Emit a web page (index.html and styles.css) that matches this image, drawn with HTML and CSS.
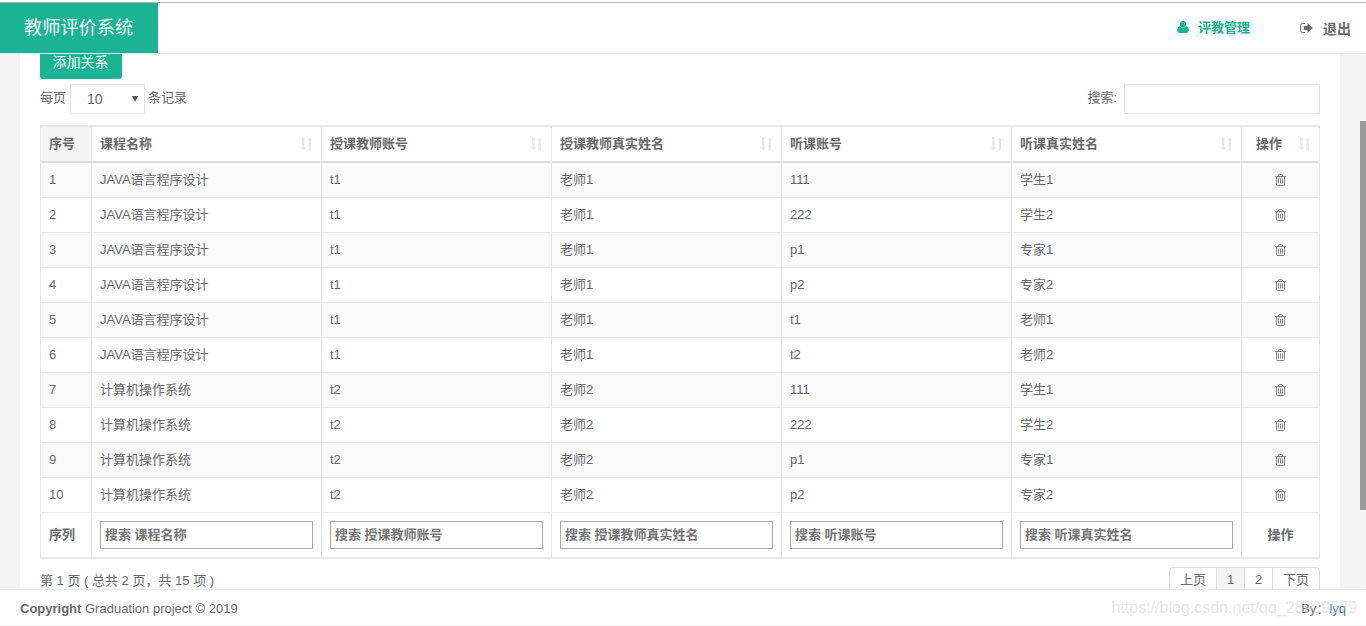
FILE: index.html
```
<!DOCTYPE html>
<html lang="zh-CN">
<head>
<meta charset="utf-8">
<title>教师评价系统</title>
<link rel="stylesheet" href="styles.css">
</head>
<body>
<svg class="defs" aria-hidden="true">
  <symbol id="sort" viewBox="0 0 13 14"><path d="M2 0h2.500v10H6.300L3.250 13.500.2 10H2zM8.500 13.500H11V3.500h1.800L9.750 0 6.700 3.500h1.800z"/></symbol>
  <symbol id="trash" viewBox="0 0 11 12"><path fill="none" stroke="currentColor" d="M.2 2.500h10.600M3.500 2.300V1.500Q3.500.5 4.500.5h2q1 0 1 1v.8M1.500 2.500v8q0 1 1 1h6q1 0 1-1v-8M3.500 4.500v5M5.500 4.500v5M7.500 4.500v5"/></symbol>
</svg>
<div class="page">
  <header class="header">
    <a class="brand">教师评价系统</a>
    <nav class="nav">
      <a class="nav-link active"><svg class="user" viewBox="0 0 12 12"><circle cx="6" cy="3.300" r="3.200"/><path d="M2.900 5.300Q.2 6 .2 9.500.2 11.900 2.500 11.900h7q2.300 0 2.300-2.400Q11.800 6 9.100 5.300 6 8 2.900 5.300z"/></svg><span>评教管理</span></a>
      <a class="nav-link exit"><svg class="signout" viewBox="0 0 13 12"><path fill="none" stroke="currentColor" d="M5 1.500H2.500q-2 0-2 2v5q0 2 2 2H5"/><path d="M3.800 4h3.700V1L12.800 6 7.500 11V8H3.800z"/></svg><span>退出</span></a>
    </nav>
  </header>
  <main class="main">
    <section class="content">
      <button class="add">添加关系</button>
      <div class="tools">
        <div class="length"><span>每页</span><div class="select"><span>10</span><i class="caret"></i></div><span>条记录</span></div>
        <label class="search"><span>搜索:</span><input type="text"></label>
      </div>
      <table class="table">
        <colgroup><col class="c-no"><col><col><col><col><col><col class="c-op"></colgroup>
        <thead><tr>
          <th class="sorted">序号</th>
          <th><div class="head">课程名称<svg><use href="#sort"/></svg></div></th>
          <th><div class="head">授课教师账号<svg><use href="#sort"/></svg></div></th>
          <th><div class="head">授课教师真实姓名<svg><use href="#sort"/></svg></div></th>
          <th><div class="head">听课账号<svg><use href="#sort"/></svg></div></th>
          <th><div class="head">听课真实姓名<svg><use href="#sort"/></svg></div></th>
          <th><div class="head op-head">操作<svg><use href="#sort"/></svg></div></th>
        </tr></thead>
        <tbody>
          <tr><td>1</td><td>JAVA语言程序设计</td><td>t1</td><td>老师1</td><td>111</td><td>学生1</td><td class="op"><svg><use href="#trash"/></svg></td></tr>
          <tr><td>2</td><td>JAVA语言程序设计</td><td>t1</td><td>老师1</td><td>222</td><td>学生2</td><td class="op"><svg><use href="#trash"/></svg></td></tr>
          <tr><td>3</td><td>JAVA语言程序设计</td><td>t1</td><td>老师1</td><td>p1</td><td>专家1</td><td class="op"><svg><use href="#trash"/></svg></td></tr>
          <tr><td>4</td><td>JAVA语言程序设计</td><td>t1</td><td>老师1</td><td>p2</td><td>专家2</td><td class="op"><svg><use href="#trash"/></svg></td></tr>
          <tr><td>5</td><td>JAVA语言程序设计</td><td>t1</td><td>老师1</td><td>t1</td><td>老师1</td><td class="op"><svg><use href="#trash"/></svg></td></tr>
          <tr><td>6</td><td>JAVA语言程序设计</td><td>t1</td><td>老师1</td><td>t2</td><td>老师2</td><td class="op"><svg><use href="#trash"/></svg></td></tr>
          <tr><td>7</td><td>计算机操作系统</td><td>t2</td><td>老师2</td><td>111</td><td>学生1</td><td class="op"><svg><use href="#trash"/></svg></td></tr>
          <tr><td>8</td><td>计算机操作系统</td><td>t2</td><td>老师2</td><td>222</td><td>学生2</td><td class="op"><svg><use href="#trash"/></svg></td></tr>
          <tr><td>9</td><td>计算机操作系统</td><td>t2</td><td>老师2</td><td>p1</td><td>专家1</td><td class="op"><svg><use href="#trash"/></svg></td></tr>
          <tr><td>10</td><td>计算机操作系统</td><td>t2</td><td>老师2</td><td>p2</td><td>专家2</td><td class="op"><svg><use href="#trash"/></svg></td></tr>
        </tbody>
        <tfoot><tr>
          <th>序列</th>
          <th><input placeholder="搜索 课程名称"></th>
          <th><input placeholder="搜索 授课教师账号"></th>
          <th><input placeholder="搜索 授课教师真实姓名"></th>
          <th><input placeholder="搜索 听课账号"></th>
          <th><input placeholder="搜索 听课真实姓名"></th>
          <th class="op">操作</th>
        </tr></tfoot>
      </table>
      <div class="bottom">
        <div class="info">第 1 页 ( 总共 2 页，共 15 项 )</div>
        <div class="pager"><a class="wide">上页</a><a class="current">1</a><a>2</a><a class="wide">下页</a></div>
      </div>
    </section>
    <div class="scroll"><div class="thumb"></div></div>
  </main>
  <footer class="footer">
    <div><b>Copyright</b> Graduation project © 2019</div>
    <div class="by">By：<a>lyq</a></div>
    <div class="watermark">https://blog.csdn.net/qq_28929579</div>
  </footer>
</div>
</body>
</html>
```
FILE: styles.css
```
* { box-sizing: border-box; }
body { margin: 0; overflow: hidden; font: 13px/18px "Liberation Sans", "Noto Sans CJK SC", sans-serif; color: #676a6c; background: #fff; }
input, button { font: inherit; color: inherit; }
.defs { display: none; }
.page { display: flex; flex-direction: column; height: 626px; padding-top: 2px; }
.header { display: flex; justify-content: space-between; height: 52px; flex: none; border-top: 1px solid #b4b4b4; border-bottom: 1px solid #e7eaec; }
.brand { width: 158px; height: 50px; padding-left: 24px; background: #1ab394; color: #fff; font-size: 18.2px; line-height: 50px; }
.nav { display: flex; align-items: center; gap: 50px; padding-right: 15px; font-weight: bold; }
.nav-link { display: flex; align-items: center; height: 49px; }
.nav-link svg { fill: currentColor; }
.active { color: #1ab394; }
.user { width: 12px; height: 12px; margin: 0 9px 2px -1px; }
.exit { font-size: 14px; }
.signout { width: 13px; height: 12px; margin: 0 10px 0 0; }
.exit span { padding-top: 1px; }
.main { display: flex; justify-content: space-between; flex: 1; min-height: 0; overflow: hidden; padding-left: 20px; background: #f3f3f4; }
.content { width: 1320px; padding: 0 20px; background: #fff; }
.add { display: block; width: 82px; height: 33px; margin-top: -8px; padding: 0 1px 0 0; border: 0; border-radius: 3px; background: #1ab394; color: #fff; font-size: 14px; line-height: 33px; }
.tools { display: flex; justify-content: space-between; height: 30px; margin: 5px 0 11px; line-height: 27px; }
.length, .search { display: flex; }
.select { display: flex; align-items: center; justify-content: space-between; width: 75px; height: 30px; margin: 0 3px 0 4px; padding: 1px 6px 0 16px; border: 1px solid #e5e6e7; font-size: 14px; }
.caret { border: 3.5px solid transparent; border-top: 6px solid #555; border-bottom: 0; margin-top: -2px; }
.search input { width: 196px; height: 30px; margin-left: 7px; border: 1px solid #e5e6e7; background: #fff; }
.table { table-layout: fixed; width: 1280px; border-spacing: 0; border-left: 1px solid #e7e7e7; border-top: 2px solid #e7e7e7; }
.c-no { width: 51px; }
.c-op { width: 78px; }
th, td { padding: 0 8px; text-align: left; border-right: 1px solid #e7e7e7; border-bottom: 1px solid #e7eaec; line-height: 18px; }
td { height: 35px; }
tbody tr:nth-child(odd) { background: #f9f9f9; }
thead th { height: 36px; border-bottom: 2px solid #ddd; }
thead th, tfoot th { padding-bottom: 1px; }
.sorted { background: #f5f5f6; }
.head { display: flex; align-items: center; justify-content: space-between; }
.head svg { width: 13px; height: 14px; fill: #e9e9e9; }
.op-head { padding-left: 6px; }
.op { text-align: center; }
.op svg { display: block; width: 11px; height: 12px; margin: 0 auto 1px; color: #828486; }
tfoot th { height: 46px; border-bottom: 2px solid #e7e7e7; }
tfoot input { display: block; width: 213px; height: 28px; padding: 0 4px 2px; margin-top: 1px; border: 1px solid #a9a9a9; background: #fff; }
tfoot input::placeholder { color: #757575; opacity: 1; }
.bottom { display: flex; justify-content: space-between; padding-top: 8px; }
.info { padding-top: 5px; }
.pager { display: flex; height: 30px; border: 1px solid #ddd; border-radius: 4px; overflow: hidden; line-height: 24px; }
.pager a { width: 28px; text-align: center; border-right: 1px solid #ddd; }
.pager .wide { width: 47px; }
.pager a:last-child { border-right: 0; width: 46px; }
.pager .current { background: #f4f4f4; }
.scroll { width: 6px; padding-top: 67px; background: #f5f5f5; }
.thumb { height: 389px; background: #999; }
.footer { position: relative; display: flex; justify-content: space-between; align-items: center; height: 37px; flex: none; padding: 3px 20px 0; border-top: 1px solid #e7eaec; border-bottom: 1px solid #f0f0f0; }
.by a { color: #337ab7; }
.watermark { position: absolute; right: 9px; top: 9px; font-size: 16px; color: rgba(215, 215, 215, .65); white-space: nowrap; }
```
